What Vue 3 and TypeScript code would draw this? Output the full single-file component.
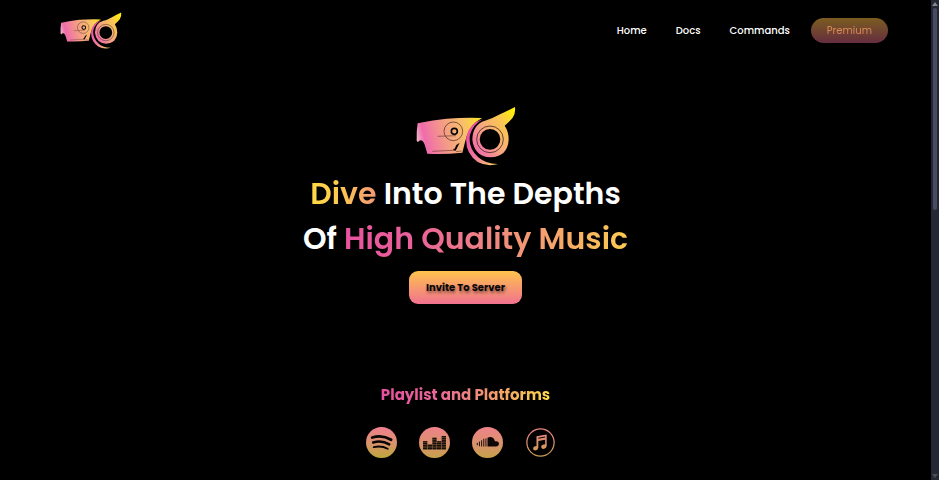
<script setup lang="ts">
interface NavLink {
  label: string
  href: string
}

const navLinks: NavLink[] = [
  { label: 'Home', href: '#home' },
  { label: 'Docs', href: '#docs' },
  { label: 'Commands', href: '#commands' },
]

// Equalizer columns: left edge and number of stacked cells
const bars = [
  { x: 13, cells: 5 },
  { x: 28, cells: 3 },
  { x: 43, cells: 7 },
  { x: 58, cells: 5 },
  { x: 73, cells: 8 },
]
</script>

<template>
  <div class="page">
    <!-- Shared artwork -->
    <svg class="defs" aria-hidden="true">
      <defs>
        <linearGradient id="head-fill" gradientUnits="userSpaceOnUse" x1="34" y1="100" x2="225" y2="50">
          <stop offset="0" stop-color="#efadc6" />
          <stop offset="0.1" stop-color="#f06bab" />
          <stop offset="0.4" stop-color="#f49a88" />
          <stop offset="0.75" stop-color="#fac267" />
          <stop offset="1" stop-color="#fde51c" />
        </linearGradient>
        <linearGradient id="ring-fill" gradientUnits="userSpaceOnUse" x1="205" y1="130" x2="330" y2="35">
          <stop offset="0" stop-color="#f274a5" />
          <stop offset="0.35" stop-color="#f7aa7c" />
          <stop offset="0.7" stop-color="#fbc84e" />
          <stop offset="1" stop-color="#fff200" />
        </linearGradient>
        <linearGradient id="arc-fill" gradientUnits="userSpaceOnUse" x1="190" y1="110" x2="278" y2="190">
          <stop offset="0" stop-color="#ed52a5" />
          <stop offset="0.5" stop-color="#f27c9d" />
          <stop offset="1" stop-color="#f9d45b" />
        </linearGradient>
        <linearGradient id="platform-fill" gradientUnits="userSpaceOnUse" x1="0" y1="0" x2="0" y2="100">
          <stop offset="0" stop-color="#ef8289" />
          <stop offset="0.5" stop-color="#dc906f" />
          <stop offset="1" stop-color="#c6a04c" />
        </linearGradient>
        <linearGradient id="spotify-fill" gradientUnits="userSpaceOnUse" x1="0" y1="0" x2="0" y2="100">
          <stop offset="0" stop-color="#f27f90" />
          <stop offset="0.55" stop-color="#d8946a" />
          <stop offset="1" stop-color="#bda63a" />
        </linearGradient>
        <symbol id="brand-mark" viewBox="33 18 300 180">
          <path
            fill="url(#head-fill)"
            d="M38 70 Q85 60 125 56 Q180 52 231 54 Q193 75 184 112 Q179 130 172 158 Q116 164 67 161 L61 140 Q56 122 48 121 Q41 121 39 127 L35 122 Q34 92 38 70Z"
          />
          <path
            fill="url(#arc-fill)"
            d="M233 58 Q193 69 184 110 Q179 158 218 186 Q246 201 280 192 Q244 193 219 171 Q188 142 195 104 Q205 73 233 58Z"
          />
          <path
            fill="url(#ring-fill)"
            fill-rule="evenodd"
            d="M330 21 Q332 42 323 53 Q315 63 299 77 Q311 94 311 119 Q308 170 256 172 Q208 169 202 119 Q203 73 240 62 Q262 56 285 43 Q309 31 330 21Z M255 87 A31 31 0 1 0 255 149 A31 31 0 1 0 255 87Z"
          />
          <circle cx="255" cy="118" r="40" fill="none" stroke="#160b10" stroke-width="2" />
          <circle cx="145" cy="94" r="28" fill="none" stroke="#3d251d" stroke-width="2" />
          <circle cx="148" cy="94" r="9" fill="none" stroke="#080506" stroke-width="5" />
          <path d="M98 109 L153 107" stroke="#6b3c39" stroke-width="2" />
          <path d="M82 154 L142 151 L148 146 M153 155 L170 153" fill="none" stroke="#6b3c39" stroke-width="2" />
          <path d="M143 151 L149 146 L154 135 L164 128 L152 152Z" fill="#080505" />
        </symbol>
      </defs>
    </svg>

    <div class="content">
      <header class="topbar">
        <a class="brand" href="#home" aria-label="Home page">
          <svg class="brand-small" aria-hidden="true"><use href="#brand-mark" /></svg>
        </a>
        <nav class="nav">
          <a v-for="link in navLinks" :key="link.label" class="nav-link" :href="link.href">{{ link.label }}</a>
          <a class="premium" href="#premium"><span class="premium-text">Premium</span></a>
        </nav>
      </header>

      <main>
        <section class="hero">
          <svg class="brand-large" aria-hidden="true"><use href="#brand-mark" /></svg>
          <h1 class="title">
            <span class="line"><span class="warm">Dive</span> Into The Depths</span>
            <span class="line">Of <span class="sunset">High Quality Music</span></span>
          </h1>
          <button class="invite" type="button">Invite To Server</button>
        </section>

        <section class="platforms">
          <h2 class="subtitle">Playlist and Platforms</h2>
          <ul class="platform-list">
            <li>
              <svg class="platform" viewBox="0 0 100 100" role="img" aria-label="Spotify">
                <circle cx="50" cy="50" r="50" fill="url(#spotify-fill)" />
                <g fill="none" stroke="#080505" stroke-linecap="round">
                  <path d="M20 34 Q52 24 81 41" stroke-width="9" />
                  <path d="M23 50 Q51 42 75 56" stroke-width="8" />
                  <path d="M25 65 Q49 59 70 70" stroke-width="6" />
                </g>
              </svg>
            </li>
            <li>
              <svg class="platform" viewBox="0 0 100 100" role="img" aria-label="Deezer">
                <circle cx="50" cy="50" r="50" fill="url(#platform-fill)" />
                <g v-for="bar in bars" :key="bar.x" fill="#171009">
                  <rect v-for="n in bar.cells" :key="n" :x="bar.x" :y="73 - n * 5.5" width="14" height="5" />
                </g>
              </svg>
            </li>
            <li>
              <svg class="platform" viewBox="0 0 100 100" role="img" aria-label="SoundCloud">
                <circle cx="50" cy="50" r="50" fill="url(#platform-fill)" />
                <path d="M17 51V59M24 47V62M31 43V63M38 38V63M45 37V63" stroke="#0d0806" stroke-width="3" />
                <path d="M50 35 Q68 27 74 46 Q87 44 87 54 Q86 63 77 63 H50Z" fill="#0d0806" />
              </svg>
            </li>
            <li>
              <svg class="platform" viewBox="0 0 100 100" role="img" aria-label="Apple Music">
                <circle cx="50" cy="50" r="44" fill="none" stroke="url(#platform-fill)" stroke-width="4" />
                <path
                  fill="url(#platform-fill)"
                  fill-rule="evenodd"
                  d="M37 30 L70 24 V61 Q69 70 60 71 Q52 71 52 64 Q53 57 65 56 V41 L43 45 V67 Q42 75 33 76 Q25 75 26 68 Q28 61 37 61Z M43 35 V38 L65 34 V31Z"
                />
              </svg>
            </li>
          </ul>
        </section>
      </main>
    </div>

    <div class="scroll-track" aria-hidden="true">
      <svg class="arrow" viewBox="0 0 8 8"><path d="M4 2 L7 6 H1Z" /></svg>
      <span class="thumb"></span>
      <svg class="arrow arrow-down" viewBox="0 0 8 8"><path d="M1 2 H7 L4 6Z" /></svg>
    </div>
  </div>
</template>

<style>
body {
  background: #000;
}
</style>

<style scoped>
.page {
  display: flex;
  min-height: 100vh;
  background: #000;
  color: #fff;
  font-family: Poppins, Inter, 'Liberation Sans', sans-serif;
}

.defs {
  position: absolute;
  width: 0;
  height: 0;
}

.content {
  flex: 1;
  min-width: 0;
}

.topbar {
  display: flex;
  align-items: center;
  justify-content: space-between;
  padding: 12px 43px 0 60px;
}

.brand,
.brand-small,
.brand-large,
.platform {
  display: block;
}

.brand-small {
  width: 62px;
  height: 37px;
}

.nav {
  display: flex;
  align-items: center;
  gap: 29px;
}

.nav-link {
  color: #fff;
  font-size: 10px;
  font-weight: 500;
  line-height: 15px;
  text-decoration: none;
}

.premium {
  margin-left: -8px;
  padding: 5px 16px;
  border-radius: 13px;
  background: linear-gradient(#7b5c20, #652d40);
  font-size: 10px;
  line-height: 15px;
  text-decoration: none;
}

.premium-text {
  background: linear-gradient(#e0a04f, #dd7763);
  background-clip: text;
  color: transparent;
}

.hero {
  display: flex;
  flex-direction: column;
  align-items: center;
  padding-top: 57px;
}

.brand-large {
  width: 100px;
  height: 60px;
}

.title {
  margin: 5px 0 10px;
  font-size: 30px;
  font-weight: 600;
  line-height: 45px;
  text-align: center;
}

.line {
  display: block;
}

.warm,
.sunset,
.subtitle {
  background: linear-gradient(90deg, #ffd944, #fdc851 45%, #f29776);
  background-clip: text;
  color: transparent;
}

.sunset {
  background-image: linear-gradient(90deg, #e9539f, #e9619a 25%, #f08b7d 55%, #f8ad66 80%, #fdcb50);
}

.invite {
  height: 33px;
  padding: 0 17px;
  border: 0;
  border-radius: 9px;
  background: linear-gradient(#fec34e, #f1728f);
  color: #0b0606;
  font-family: inherit;
  font-size: 10px;
  font-weight: 700;
  line-height: 15px;
  text-shadow: 1px 2px 3px rgba(0, 0, 0, 0.5);
}

.platforms {
  display: flex;
  flex-direction: column;
  align-items: center;
  padding-top: 80px;
}

.subtitle {
  margin: 0;
  background-image: linear-gradient(90deg, #e84fa1, #ec6898 35%, #f2986f 65%, #fed84a);
  font-size: 15px;
  font-weight: 700;
  line-height: 22px;
}

.platform-list {
  display: flex;
  gap: 22px;
  margin: 0;
  padding: 21px 9px 0 0;
  list-style: none;
}

.platform {
  width: 31px;
  height: 31px;
}

.scroll-track {
  display: flex;
  flex-direction: column;
  width: 8px;
  background: #242734;
}

.arrow {
  width: 8px;
  height: 8px;
  fill: #85878c;
}

.arrow-down {
  margin-top: auto;
  fill: #4c4f52;
}

.thumb {
  height: 42%;
  margin: 0 2px;
  border-radius: 2px;
  background: #484b64;
}
</style>
